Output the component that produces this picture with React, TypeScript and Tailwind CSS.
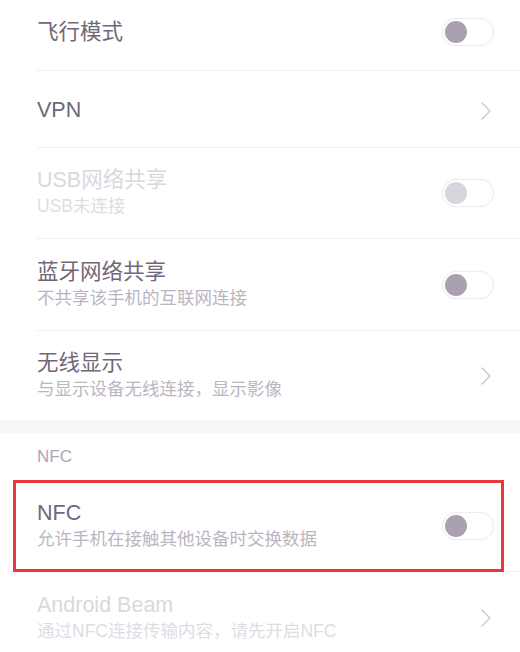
import React from 'react';

type RowProps = {
  title: string;
  subtitle?: string;
  disabled?: boolean;
  control: 'toggle' | 'chevron';
  height: string;
  inner?: string;
  divider?: boolean;
  children?: React.ReactNode;
};

function Toggle({ disabled }: { disabled?: boolean }) {
  return (
    <div className="flex h-[28px] w-[52px] items-center rounded-full border border-[#ecebef] bg-white px-[2px] shadow-[0_0_2px_rgba(0,0,0,0.04)]">
      <div className={disabled ? 'h-[22px] w-[22px] rounded-full bg-[#d8d6dc]' : 'h-[22px] w-[22px] rounded-full bg-[#a9a1b2]'} />
    </div>
  );
}

function Chevron() {
  return (
    <svg width="12" height="20" viewBox="0 0 12 20" fill="none" className="mr-[2px]">
      <path d="M2 2 L10 10 L2 18" stroke="#cbc7cf" strokeWidth="1.4" strokeLinecap="round" strokeLinejoin="round" />
    </svg>
  );
}

function Row({ title, subtitle, disabled, control, height, inner = '', divider = true, children }: RowProps) {
  return (
    <div className={`relative pl-[37px] ${height}`}>
      <div className={`flex h-full items-center pr-[26px] ${inner} ${divider ? 'border-b border-[#f0eff3]' : ''}`}>
        <div className="flex flex-1 flex-col">
          <span className={`text-[21.5px] leading-[27px] ${disabled ? 'text-[#dad7df]' : 'text-[#6f6879]'}`}>{title}</span>
          {subtitle && (
            <span className={`text-[17.5px] leading-[25px] ${disabled ? 'text-[#dfdce3]' : 'text-[#bbb5c2]'}`}>{subtitle}</span>
          )}
        </div>
        {control === 'toggle' ? <Toggle disabled={disabled} /> : <Chevron />}
      </div>
      {children}
    </div>
  );
}

export default function App() {
  return (
    <div
      className="h-[652px] w-[520px] overflow-hidden bg-white"
      style={{ fontFamily: '"Liberation Sans", "Noto Sans CJK SC", sans-serif' }}
    >
      <Row title="飞行模式" control="toggle" height="h-[71px]" inner="pb-[6px]" />
      <Row title="VPN" control="chevron" height="h-[77px]" inner="pt-[3px]" />
      <Row title="USB网络共享" subtitle="USB未连接" disabled control="toggle" height="h-[91px]" />
      <Row title="蓝牙网络共享" subtitle="不共享该手机的互联网连接" control="toggle" height="h-[92px]" />
      <Row title="无线显示" subtitle="与显示设备无线连接，显示影像" control="chevron" height="h-[89px]" divider={false} />
      <div className="h-[13px] bg-[#f6f5f8]" />
      <div className="flex h-[47px] items-center pl-[37px] text-[17px] text-[#aca6b2]">NFC</div>
      <Row title="NFC" subtitle="允许手机在接触其他设备时交换数据" control="toggle" height="h-[92px]">
        <div className="absolute top-0 bottom-0 left-[13px] right-[16px] border-[3px] border-[#e8383d]" />
      </Row>
      <Row title="Android Beam" subtitle="通过NFC连接传输内容，请先开启NFC" disabled control="chevron" height="h-[92px]" />
    </div>
  );
}
